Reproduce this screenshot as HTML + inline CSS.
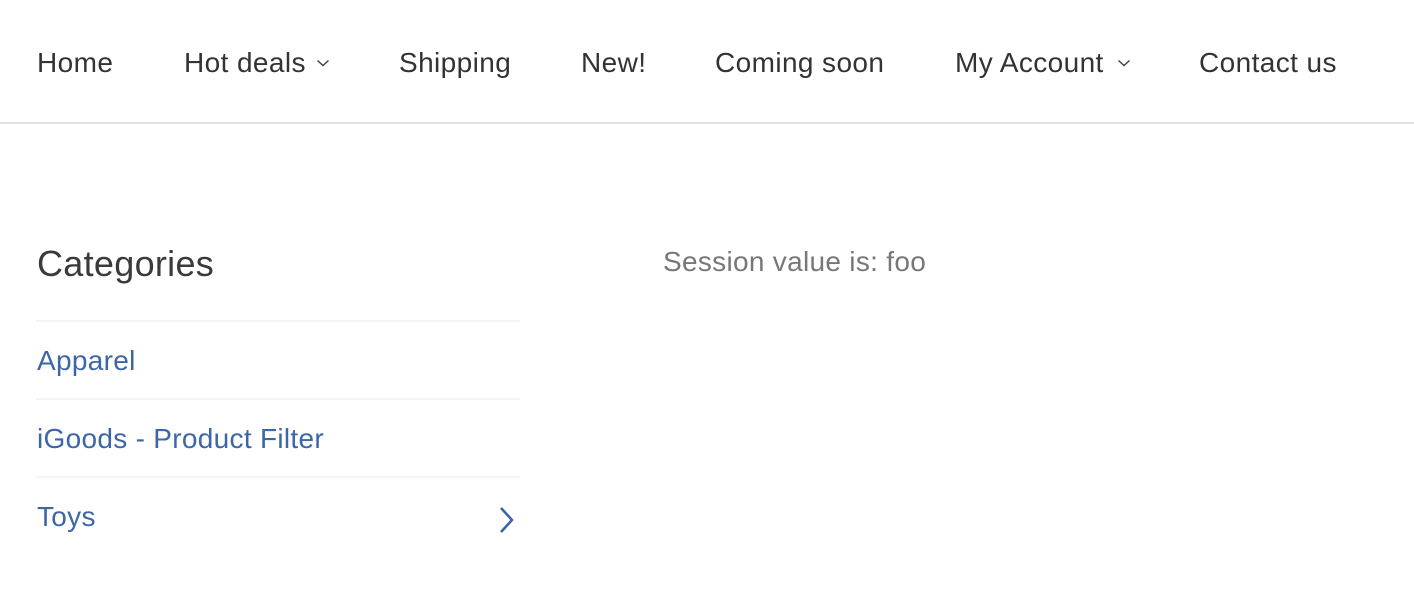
<!DOCTYPE html>
<html><head><meta charset="utf-8"><style>
body{margin:0;width:1414px;height:596px;background:#fff;font-family:"Liberation Sans",sans-serif;position:relative;overflow:hidden}
.t{position:absolute;line-height:1;white-space:nowrap}
.n{font-size:28px;letter-spacing:0.4px;color:#333;top:49px}
.c{position:absolute;left:316px;top:58px}
.l{font-size:28px;letter-spacing:0.3px;color:#3d66a7}
.hr{position:absolute;left:36px;width:484px;height:2px;background:#f4f4f4}
</style></head><body>
<div class="t n" style="left:37px">Home</div>
<div class="t n" style="left:184px">Hot deals</div>
<svg class="c" width="14" height="10" viewBox="0 0 14 10"><path d="M1.5 2.5 L7 7.5 L12.5 2.5" fill="none" stroke="#444" stroke-width="1.5"/></svg>
<div class="t n" style="left:399px">Shipping</div>
<div class="t n" style="left:581px">New!</div>
<div class="t n" style="left:715px">Coming soon</div>
<div class="t n" style="left:955px">My Account</div>
<svg class="c" style="left:1117px" width="14" height="10" viewBox="0 0 14 10"><path d="M1.5 2.5 L7 7.5 L12.5 2.5" fill="none" stroke="#444" stroke-width="1.5"/></svg>
<div class="t n" style="left:1199px">Contact us</div>
<div style="position:absolute;left:0;top:122px;width:1414px;height:2px;background:#e2e2e2"></div>
<div class="t" style="left:37px;top:246px;font-size:36px;letter-spacing:0.3px;color:#3a3a3a">Categories</div>
<div class="t" style="left:663px;top:248px;font-size:28px;letter-spacing:0.3px;color:#777">Session value is: foo</div>
<div class="hr" style="top:320px"></div>
<div class="t l" style="left:37px;top:347px">Apparel</div>
<div class="hr" style="top:398px"></div>
<div class="t l" style="left:37px;top:425px">iGoods - Product Filter</div>
<div class="hr" style="top:476px"></div>
<div class="t l" style="left:37px;top:503px">Toys</div>
<svg style="position:absolute;left:498px;top:506px" width="18" height="28" viewBox="0 0 18 28"><path d="M3 2 L14 14 L3 26" fill="none" stroke="#3d66a7" stroke-width="2.6"/></svg>
</body></html>
